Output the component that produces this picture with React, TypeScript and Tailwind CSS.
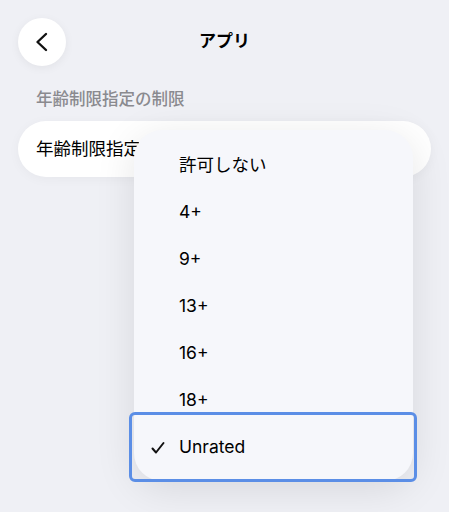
const items = ["許可しない", "4+", "9+", "13+", "16+", "18+", "Unrated"];

export default function App() {
  return (
    <div
      className="relative h-[512px] w-[449px] overflow-hidden bg-[#eff0f5] px-[18px] pt-[18px] text-black"
      style={{ fontFamily: 'Inter, "Noto Sans CJK JP", sans-serif' }}
    >
      <div className="flex items-center">
        <button className="flex h-[48px] w-[48px] items-center justify-center rounded-full bg-white shadow-[0_2px_10px_rgba(0,0,0,0.06)]">
          <svg width="20" height="20" viewBox="0 0 20 20" fill="none">
            <path d="M14 2 L5.5 10 L14 18" stroke="#111" strokeWidth="2.4" strokeLinecap="round" strokeLinejoin="round" />
          </svg>
        </button>
        <div className="flex-1 text-center text-[17px] font-bold">アプリ</div>
        <div className="w-[48px]" />
      </div>

      <div className="mt-[21px] pl-[18px] text-[16.5px] font-medium text-[#8a8a8f]">年齢制限指定の制限</div>

      <div className="mt-[9px] flex h-[56px] items-center rounded-[28px] bg-white pl-[18px] text-[17.5px] shadow-[0_2px_12px_rgba(0,0,0,0.04)]">
        年齢制限指定
      </div>

      <div className="absolute left-[134px] top-[130px] w-[279px] rounded-[28px] bg-[#f6f7fb] pb-[10px] pt-[12px] shadow-[0_8px_40px_rgba(0,0,0,0.10)]">
        {items.map((it) => (
          <div key={it} className="flex h-[47px] items-center text-[17.5px]">
            <div className="flex w-[45px] justify-end pr-[14px]">
              {it === "Unrated" && (
                <svg width="14" height="14" viewBox="0 0 14 14" fill="none">
                  <path d="M1.5 7.5 L5 11.5 L12.5 2" stroke="#111" strokeWidth="2" strokeLinecap="round" strokeLinejoin="round" />
                </svg>
              )}
            </div>
            <span>{it}</span>
          </div>
        ))}
      </div>

      <div className="absolute left-[129px] top-[412px] h-[70px] w-[288px] rounded-[6px] border-[3px] border-[#5b8ee6]" />
    </div>
  );
}
